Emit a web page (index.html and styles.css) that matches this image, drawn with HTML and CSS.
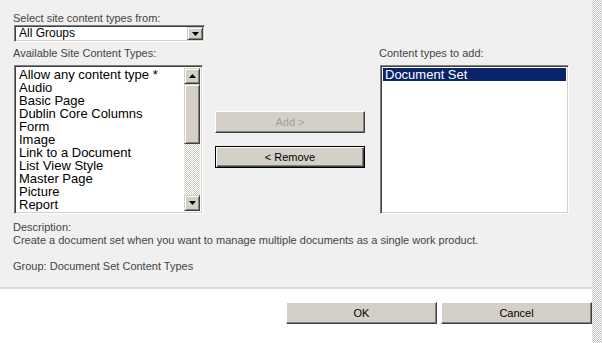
FILE: index.html
```html
<!DOCTYPE html>
<html lang="en">
<head>
    <meta charset="UTF-8">
    <title>Add Content Types</title>
    <link rel="stylesheet" href="styles.css">
</head>
<body>

<div class="window">
    <div class="main">
        <div class="panel">
            <div class="label">Select site content types from:</div>
            <div class="select">
                <span class="select-value">All Groups</span>
                <span class="drop">
                    <svg width="7" height="4" viewBox="0 0 7 4"><polygon points="0,0 7,0 3.5,4" fill="#000"/></svg>
                </span>
            </div>

            <div class="pickers">
                <!-- Available types -->
                <div class="picker">
                    <div class="label">Available Site Content Types:</div>
                    <div class="listbox">
                        <ul class="items">
                            <li>Allow any content type *</li>
                            <li>Audio</li>
                            <li>Basic Page</li>
                            <li>Dublin Core Columns</li>
                            <li>Form</li>
                            <li>Image</li>
                            <li>Link to a Document</li>
                            <li>List View Style</li>
                            <li>Master Page</li>
                            <li>Picture</li>
                            <li>Report</li>
                            <li>Rich Media Asset</li>
                        </ul>
                        <div class="scrollbar">
                            <span class="sb-btn">
                                <svg width="7" height="4" viewBox="0 0 7 4"><polygon points="0,4 7,4 3.5,0" fill="#000"/></svg>
                            </span>
                            <span class="sb-thumb"></span>
                            <span class="sb-track"></span>
                            <span class="sb-btn">
                                <svg width="7" height="4" viewBox="0 0 7 4"><polygon points="0,0 7,0 3.5,4" fill="#000"/></svg>
                            </span>
                        </div>
                    </div>
                </div>

                <!-- Add / Remove -->
                <div class="actions">
                    <button class="btn" disabled>Add &gt;</button>
                    <button class="btn btn-default">&lt; Remove</button>
                </div>

                <!-- Types to add -->
                <div class="picker picker-right">
                    <div class="label">Content types to add:</div>
                    <div class="listbox">
                        <ul class="items">
                            <li class="selected">Document Set</li>
                        </ul>
                    </div>
                </div>
            </div>

            <div class="desc">
                <div>Description:</div>
                <div>Create a document set when you want to manage multiple documents as a single work product.</div>
                <div>&nbsp;</div>
                <div>Group: Document Set Content Types</div>
            </div>
        </div>

        <div class="footer">
            <button class="btn btn-wide">OK</button>
            <button class="btn btn-wide">Cancel</button>
        </div>
    </div>
    <div class="rail"></div>
</div>

</body>
</html>
```

FILE: styles.css
```css
body {
    margin: 0;
    font-family: "Liberation Sans", Arial, sans-serif;
    background-color: #fff;
}
.window {
    display: flex;
    height: 343px;
}
.main {
    width: 592px;
}
.rail {
    width: 10px;
    background: repeating-conic-gradient(#c4c4c4 0 25%, #fff 0 50%) 0 0 / 2px 2px;
}
.panel {
    height: 289px;
    box-sizing: border-box;
    padding: 12px 0 0 13px;
    background-color: #f0f0f0;
    border-bottom: 2px solid #dadada;
}
.label {
    font-size: 11px;
    line-height: 13px;
    color: #444;
}
.select {
    display: flex;
    align-items: center;
    width: 191px;
    height: 17px;
    margin-left: 1px;
    box-sizing: border-box;
    background: #fff;
    border: 1px solid;
    border-color: #808080 #fff #fff #808080;
    box-shadow: inset 1px 1px 0 #404040, inset -1px -1px 0 #d4d0c8;
    padding: 1px;
}
.select-value {
    flex: 1;
    padding-left: 3px;
    font-size: 12px;
    line-height: 13px;
    color: #000;
}
.drop {
    display: flex;
    align-items: center;
    justify-content: center;
    width: 16px;
    height: 13px;
    box-sizing: border-box;
    background: #d4d0c8;
    border: 1px solid;
    border-color: #d4d0c8 #404040 #404040 #d4d0c8;
    box-shadow: inset 1px 1px 0 #fff, inset -1px -1px 0 #808080;
}
.pickers {
    display: flex;
    margin-top: 5px;
}
.picker {
    width: 191px;
}
.picker-right {
    margin-left: 14px;
}
.picker .label {
    margin-bottom: 5px;
}
.listbox {
    display: flex;
    width: 189px;
    height: 149px;
    margin-left: 1px;
    box-sizing: border-box;
    background: #fff;
    border: 1px solid;
    border-color: #808080 #fff #fff #808080;
    box-shadow: inset 1px 1px 0 #404040, inset -1px -1px 0 #d4d0c8;
    padding: 2px;
    overflow: hidden;
}
.items {
    flex: 1;
    list-style: none;
    margin: 0;
    padding: 0;
    overflow: hidden;
    font-size: 13px;
    line-height: 13px;
    color: #000;
}
.items li {
    padding-left: 2px;
    white-space: nowrap;
}
.items li.selected {
    background: #0a246a;
    color: #fff;
}
.scrollbar {
    display: flex;
    flex-direction: column;
    width: 16px;
}
.sb-btn,
.sb-thumb {
    display: flex;
    align-items: center;
    justify-content: center;
    height: 16px;
    box-sizing: border-box;
    background: #d4d0c8;
    border: 1px solid;
    border-color: #d4d0c8 #404040 #404040 #d4d0c8;
    box-shadow: inset 1px 1px 0 #fff, inset -1px -1px 0 #808080;
}
.sb-thumb {
    height: 60px;
}
.sb-track {
    flex: 1;
    background: repeating-conic-gradient(#d4d0c8 0 25%, #fff 0 50%) 0 0 / 2px 2px;
}
.actions {
    display: flex;
    flex-direction: column;
    gap: 13px;
    width: 150px;
    margin-left: 11px;
    padding-top: 64px;
}
.btn {
    height: 22px;
    padding: 0;
    font-family: "Liberation Sans", Arial, sans-serif;
    font-size: 11px;
    color: #000;
    background: #d4d0c8;
    border: 1px solid;
    border-color: #fff #404040 #404040 #fff;
    box-shadow: inset -1px -1px 0 #808080;
}
.btn:disabled {
    color: #a0a0a0;
}
.btn-default {
    border-color: #000;
    box-shadow: inset 1px 1px 0 #fff, inset -1px -1px 0 #404040, inset -2px -2px 0 #808080;
}
.desc {
    margin-top: 7px;
    font-size: 11px;
    line-height: 13px;
    color: #444;
}
.footer {
    display: flex;
    justify-content: flex-end;
    gap: 4px;
    padding-top: 13px;
}
.btn-wide {
    width: 151px;
}
```
